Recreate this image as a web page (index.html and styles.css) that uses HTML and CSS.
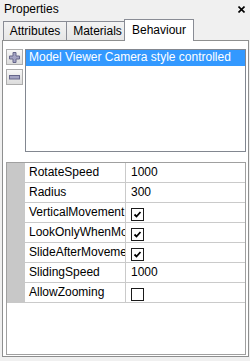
FILE: index.html
```html
<!DOCTYPE html>
<html lang="en">
<head>
  <meta charset="UTF-8" />
  <title>Properties</title>
  <link rel="stylesheet" href="styles.css">
</head>
<body>
  <div class="titlebar">
    <span>Properties</span>
    <svg class="close" width="7" height="7" viewBox="0 0 7 7">
      <path d="M0.5 0.5 L6.5 6.5 M6.5 0.5 L0.5 6.5" stroke="#000" stroke-width="1.6" />
    </svg>
  </div>

  <div class="tabs">
    <div class="tab tab-attr">Attributes</div>
    <div class="tab tab-mat">Materials</div>
    <div class="tab tab-beh active">Behaviour</div>
  </div>

  <div class="page">
    <div class="behaviours">
      <div class="tools">
        <button class="tool">
          <svg width="11" height="11" viewBox="0 0 11 11">
            <path d="M4 0.5 h3 v3.5 h3.5 v3 h-3.5 v3.5 h-3 v-3.5 h-3.5 v-3 h3.5 z" fill="#a3a3c3" stroke="#66668a" />
          </svg>
        </button>
        <button class="tool">
          <svg width="11" height="11" viewBox="0 0 11 11">
            <rect x="0.5" y="3.5" width="10" height="3.5" fill="#a3a3c3" stroke="#66668a" />
          </svg>
        </button>
      </div>
      <div class="list">
        <div class="item selected">Model Viewer Camera style controlled</div>
      </div>
    </div>

    <div class="grid">
      <div class="row">
        <div class="gutter"></div>
        <div class="name">RotateSpeed</div>
        <div class="value">1000</div>
      </div>
      <div class="row">
        <div class="gutter"></div>
        <div class="name">Radius</div>
        <div class="value">300</div>
      </div>
      <div class="row">
        <div class="gutter"></div>
        <div class="name">VerticalMovement</div>
        <div class="value"><span class="check on"><svg width="11" height="11" viewBox="0 0 11 11"><path d="M2.5 5.5 L4.5 7.5 L8.5 3" fill="none" stroke="#000" stroke-width="1.8" /></svg></span></div>
      </div>
      <div class="row">
        <div class="gutter"></div>
        <div class="name">LookOnlyWhenMouseDown</div>
        <div class="value"><span class="check on"><svg width="11" height="11" viewBox="0 0 11 11"><path d="M2.5 5.5 L4.5 7.5 L8.5 3" fill="none" stroke="#000" stroke-width="1.8" /></svg></span></div>
      </div>
      <div class="row">
        <div class="gutter"></div>
        <div class="name">SlideAfterMovement</div>
        <div class="value"><span class="check on"><svg width="11" height="11" viewBox="0 0 11 11"><path d="M2.5 5.5 L4.5 7.5 L8.5 3" fill="none" stroke="#000" stroke-width="1.8" /></svg></span></div>
      </div>
      <div class="row">
        <div class="gutter"></div>
        <div class="name">SlidingSpeed</div>
        <div class="value">1000</div>
      </div>
      <div class="row">
        <div class="gutter"></div>
        <div class="name">AllowZooming</div>
        <div class="value"><span class="check"></span></div>
      </div>
    </div>
  </div>
</body>
</html>
```

FILE: styles.css
```css
body {
  margin: 0;
  width: 250px;
  height: 361px;
  overflow: hidden;
  background: #f0f0f0;
  font-family: 'Liberation Sans', Arial, sans-serif;
  font-size: 12px;
  color: #000;
}
.titlebar {
  height: 19px;
  line-height: 19px;
  display: flex;
  align-items: center;
  justify-content: space-between;
  padding: 0 5px 0 4px;
}
.tabs {
  display: flex;
  align-items: flex-end;
  height: 21px;
  padding-left: 3px;
}
.tab {
  box-sizing: border-box;
  height: 19px;
  line-height: 18px;
  border: 1px solid #898c95;
  border-bottom: none;
  background: linear-gradient(#f3f3f3, #e6e6e6);
  text-align: center;
}
.tab + .tab {
  margin-left: -1px;
}
.tab-attr { width: 64px; }
.tab-mat { width: 59px; padding-left: 4px; }
.tab-beh { width: 70px; }
.tab.active {
  height: 22px;
  line-height: 20px;
  margin-bottom: -1px;
  background: #fff;
  position: relative;
  z-index: 1;
}
.page {
  box-sizing: border-box;
  width: 247px;
  height: 317px;
  margin-left: 2px;
  border: 1px solid #8e8f8f;
  background: #fff;
  padding: 8px 2px 1px 3px;
  display: flex;
  flex-direction: column;
  gap: 10px;
}
.behaviours {
  display: flex;
  gap: 2px;
  height: 103px;
}
.tools {
  display: flex;
  flex-direction: column;
  gap: 4px;
}
.tool {
  box-sizing: border-box;
  width: 17px;
  height: 16px;
  padding: 0;
  border: 1px solid #acacac;
  background: linear-gradient(#f7f7f7, #dcdcdc);
  display: flex;
  align-items: center;
  justify-content: center;
}
.list {
  flex: 1;
  border: 1px solid #828790;
  background: #fff;
}
.item {
  height: 16px;
  line-height: 15px;
  padding-left: 3px;
  white-space: nowrap;
}
.item.selected {
  background: #3399ff;
  color: #fff;
}
.grid {
  flex: 1;
  border: 1px solid #a0a0a0;
  background: #fff;
}
.row {
  display: grid;
  grid-template-columns: 18px 101px 1fr;
  height: 20px;
}
.gutter {
  background: #c8c8c8;
}
.name, .value {
  line-height: 19px;
  border-bottom: 1px solid #cacaca;
  white-space: nowrap;
  overflow: hidden;
}
.name {
  padding-left: 4px;
  border-right: 1px solid #cacaca;
}
.value {
  padding-left: 5px;
}
.check {
  box-sizing: border-box;
  display: block;
  width: 13px;
  height: 13px;
  margin-top: 5px;
  border: 1px solid #1a1a1a;
  background: #fff;
}
.check svg {
  display: block;
}
```
